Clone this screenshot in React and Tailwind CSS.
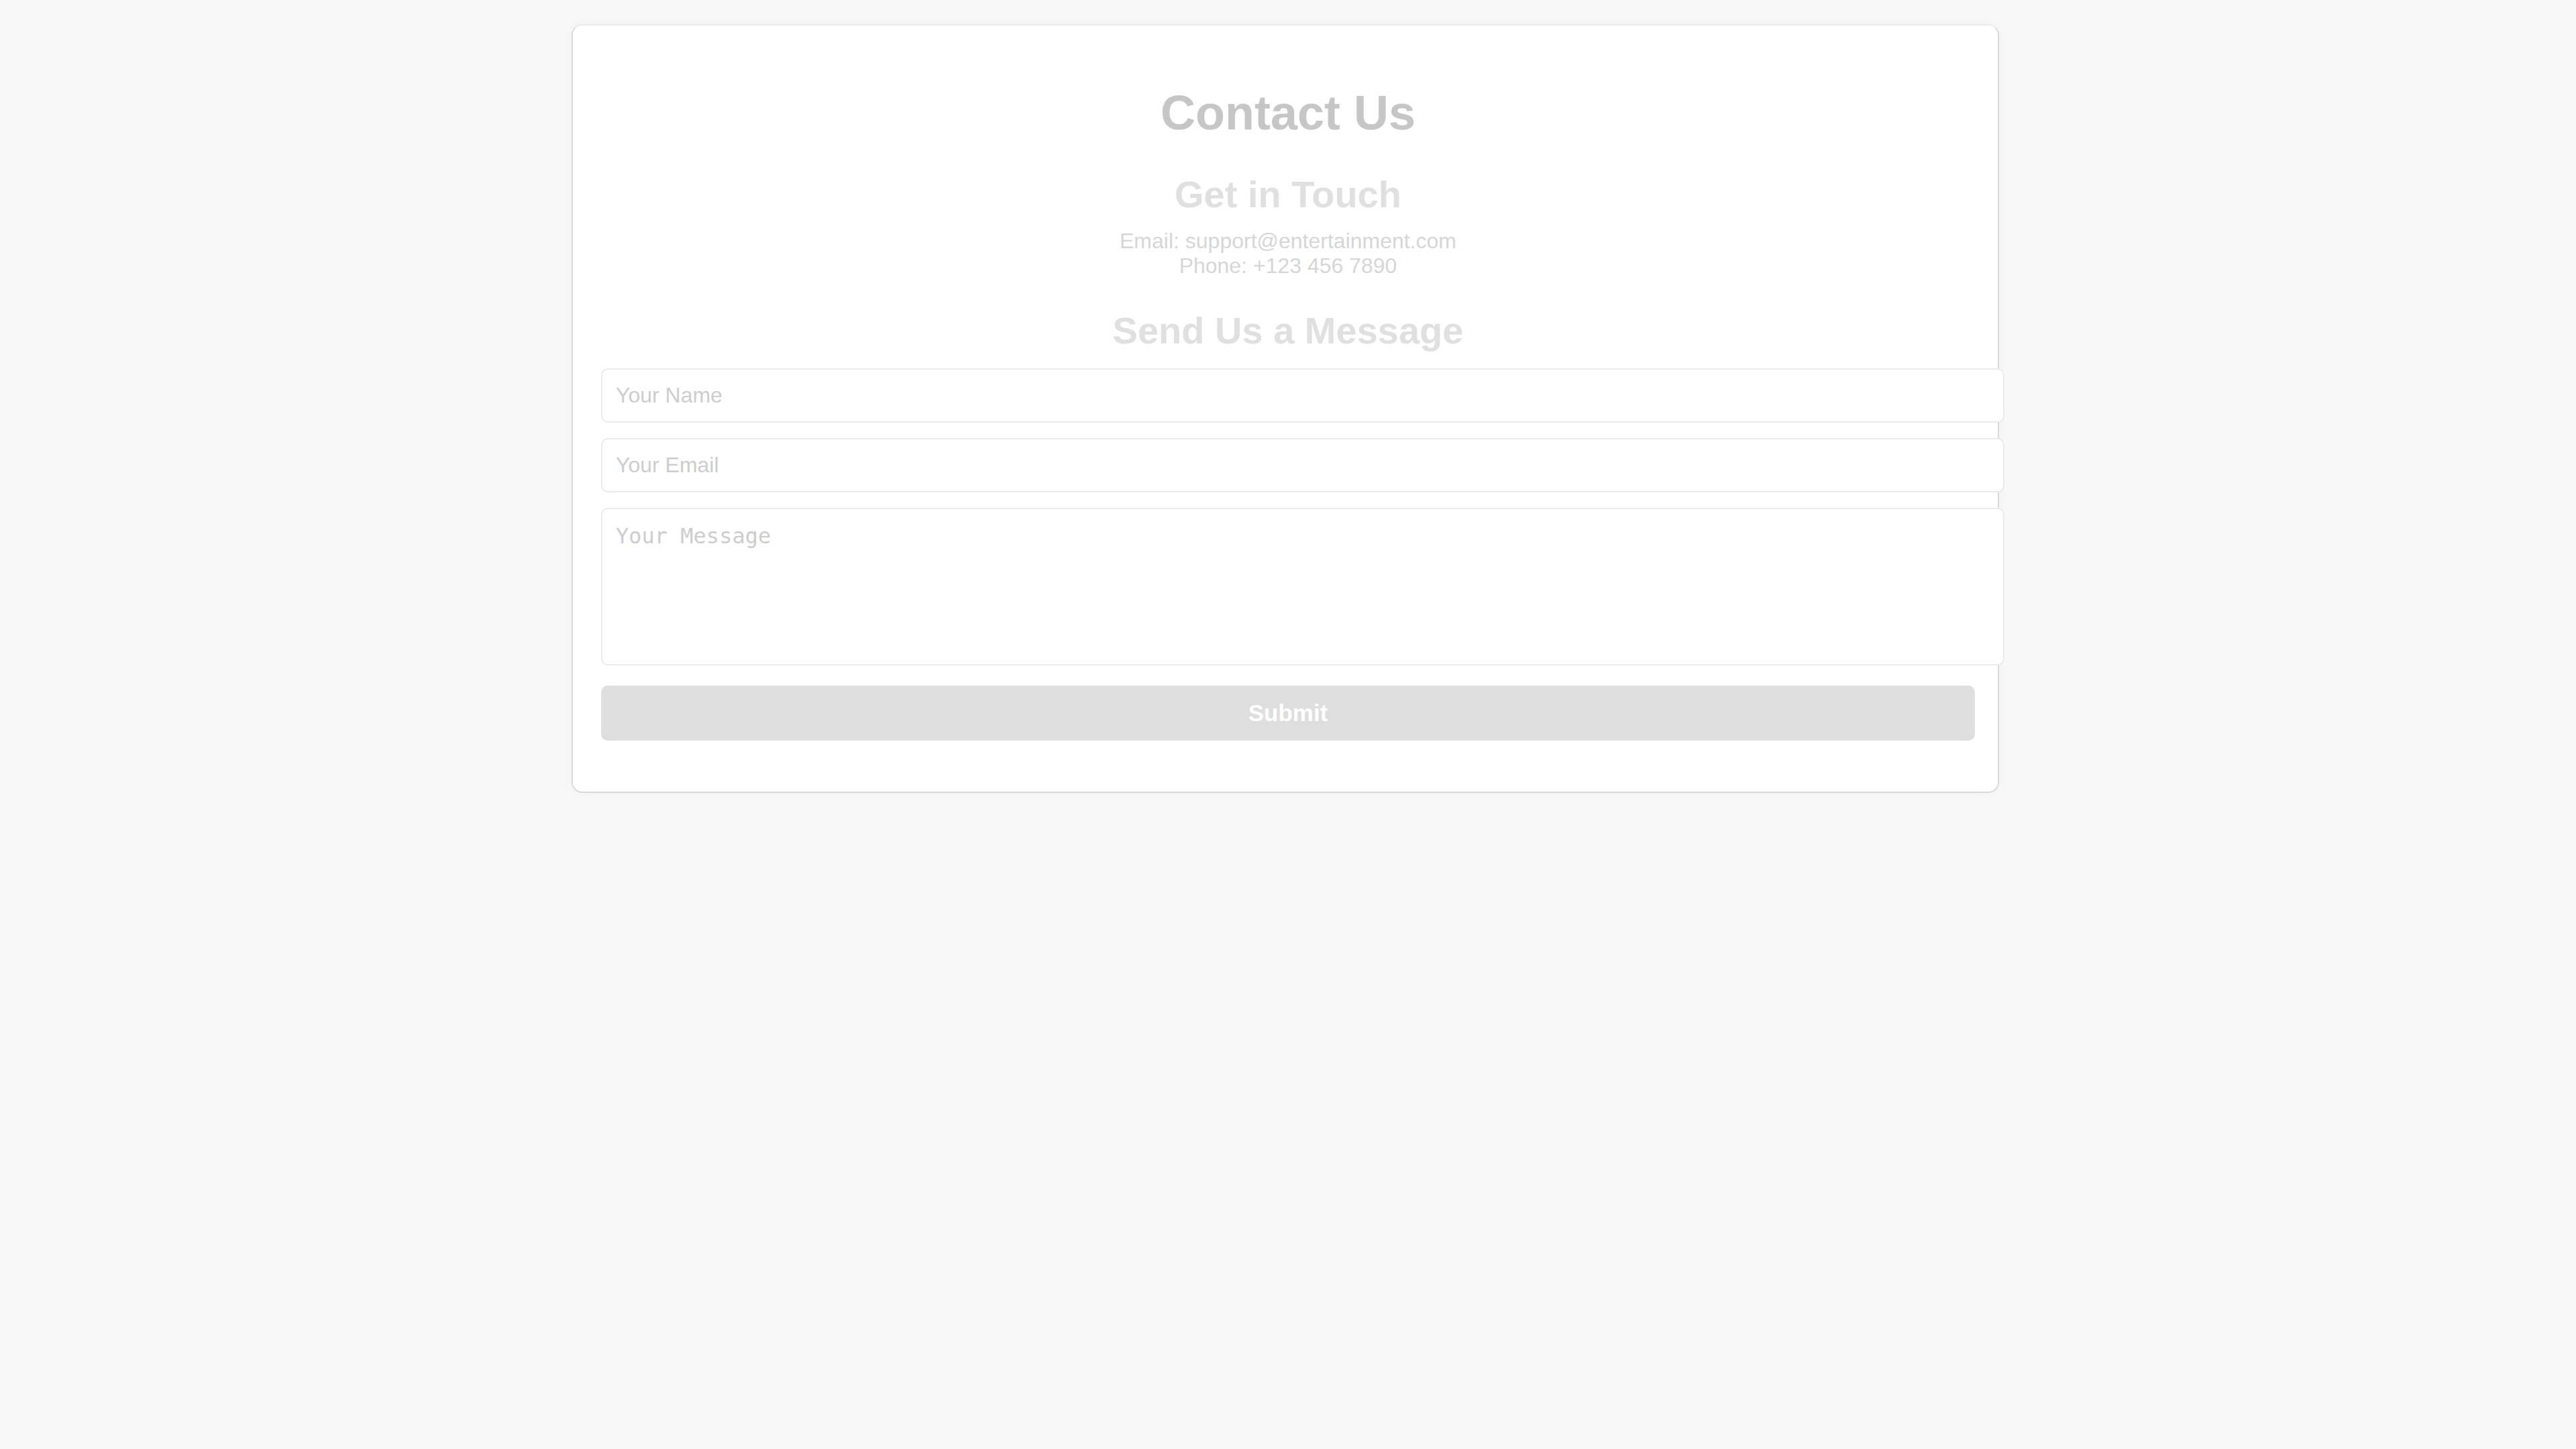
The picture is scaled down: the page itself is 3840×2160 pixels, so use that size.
const fieldClass =
  'block w-[calc(100%+44px)] rounded-[10px] border-2 border-[#ebebeb] bg-white px-[20px] py-[20px] text-[32px] leading-[37px] text-[#9a9a9a] outline-none placeholder:text-[#cdcdcd]';

const ContactPage = () => {
  return (
    <div className="min-h-screen bg-[#f8f8f8] pr-[8px] pt-[36px] font-['Liberation_Sans',Arial,sans-serif]">
      <div className="mx-auto w-[2128px] rounded-[16px] border-2 border-[#dadada] border-t-[#ebebeb] bg-white pb-[76px] pl-[42px] pr-[34px] pt-[90px] shadow-[0_0_12px_rgba(0,0,0,0.04)]">
        <h1 className="text-center text-[72px] font-bold leading-[80px] text-[#c6c6c6]">Contact Us</h1>

        <section className="mt-[50px] text-center">
          <h2 className="text-[56px] font-bold leading-[64px] text-[#e0e0e0]">Get in Touch</h2>
          <p className="mt-[19px] text-[32px] leading-[37px] text-[#d6d6d6]">Email: support@entertainment.com</p>
          <p className="text-[32px] leading-[37px] text-[#d6d6d6]">Phone: +123 456 7890</p>
        </section>

        <section className="mt-[46px]">
          <h2 className="text-center text-[56px] font-bold leading-[64px] text-[#e0e0e0]">Send Us a Message</h2>
          <form className="mt-[24px] flex flex-col" onSubmit={(e) => e.preventDefault()}>
            <input type="text" placeholder="Your Name" className={fieldClass} />
            <input type="email" placeholder="Your Email" className={`mt-[23px] ${fieldClass}`} />
            <textarea
              placeholder="Your Message"
              className={`mt-[23px] h-[235px] resize-none pt-[22px] font-['DejaVu_Sans_Mono',monospace] text-[31px] ${fieldClass}`}
            />
            <button
              type="submit"
              className="mt-[30px] h-[82px] w-full rounded-[10px] bg-[#dedede] text-[35px] font-bold text-white"
            >
              Submit
            </button>
          </form>
        </section>
      </div>
    </div>
  );
};

export default function App() {
  return <ContactPage />;
}
